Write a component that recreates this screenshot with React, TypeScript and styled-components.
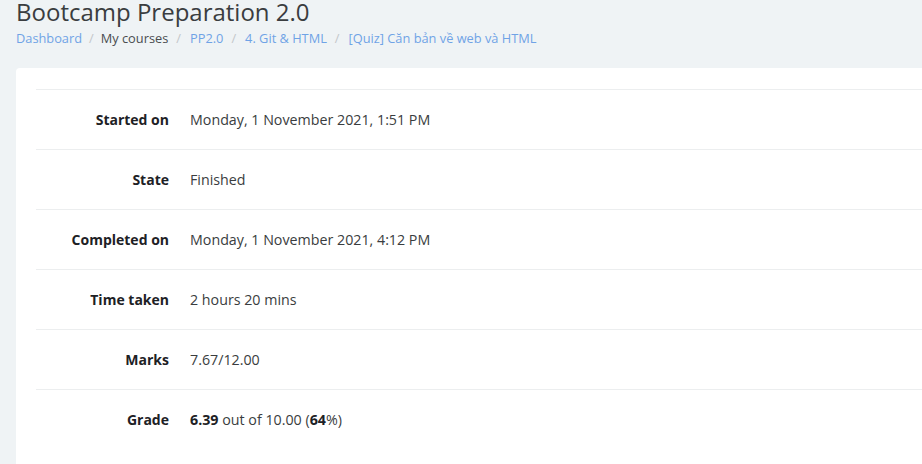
import React from "react";
import styled, { createGlobalStyle } from "styled-components";

const Global = createGlobalStyle`
  html, body { margin: 0; padding: 0; }
  body {
    background: #eff3f5;
    font-family: "Open Sans", "Noto Sans", sans-serif;
    color: #373a3c;
    overflow: hidden;
    width: 922px;
    height: 464px;
  }
`;

const Page = styled.div`
  width: 1100px;
  padding-left: 16px;
  box-sizing: border-box;
`;

const Header = styled.header`
  display: flex;
  flex-direction: column;
  margin-top: -3px;
`;

const Title = styled.h1`
  margin: 0;
  font-size: 24px;
  line-height: 29px;
  font-weight: 400;
  color: #3a3d40;
`;

const Crumbs = styled.nav`
  display: flex;
  align-items: center;
  font-size: 12.8px;
  line-height: 20px;
  margin-top: 2px;
`;

const Crumb = styled.span<{ $link?: boolean }>`
  color: ${(p) => (p.$link ? "#6fa3e6" : "#4a4d50")};
`;

const Sep = styled.span<{ $wide?: boolean }>`
  color: #c4c7ca;
  padding: ${(p) => (p.$wide ? "0 9px 0 8px" : "0 7px")};
`;

const Card = styled.section`
  margin-top: 20px;
  background: #fff;
  border-radius: 4px;
  padding: 21px 20px 20px;
`;

const Table = styled.div`
  display: grid;
  grid-template-columns: 154px 1fr;
`;

const Row = styled.div`
  display: contents;
`;

const Label = styled.div`
  text-align: right;
  font-weight: 700;
  font-size: 14px;
  line-height: 20px;
  color: #1d2125;
  padding: 20px 21px 19px 0;
  border-top: 1px solid #eceeef;
`;

const Value = styled.div`
  font-size: 14.25px;
  line-height: 20px;
  color: #3a3d40;
  padding: 20px 0 19px;
  border-top: 1px solid #eceeef;

  b {
    color: #1d2125;
  }
`;

const rows: [string, React.ReactNode][] = [
  ["Started on", "Monday, 1 November 2021, 1:51 PM"],
  ["State", "Finished"],
  ["Completed on", "Monday, 1 November 2021, 4:12 PM"],
  ["Time taken", "2 hours 20 mins"],
  ["Marks", "7.67/12.00"],
  [
    "Grade",
    <>
      <b>6.39</b> out of 10.00 (<b>64</b>%)
    </>,
  ],
];

export default function App() {
  return (
    <>
      <Global />
      <Page>
        <Header>
          <Title>Bootcamp Preparation 2.0</Title>
          <Crumbs>
            <Crumb $link>Dashboard</Crumb>
            <Sep>/</Sep>
            <Crumb>My courses</Crumb>
            <Sep $wide>/</Sep>
            <Crumb $link>PP2.0</Crumb>
            <Sep $wide>/</Sep>
            <Crumb $link>4. Git &amp; HTML</Crumb>
            <Sep $wide>/</Sep>
            <Crumb $link>[Quiz] Căn bản về web và HTML</Crumb>
          </Crumbs>
        </Header>
        <Card>
          <Table>
            {rows.map(([l, v]) => (
              <Row key={l}>
                <Label>{l}</Label>
                <Value>{v}</Value>
              </Row>
            ))}
          </Table>
        </Card>
      </Page>
    </>
  );
}
